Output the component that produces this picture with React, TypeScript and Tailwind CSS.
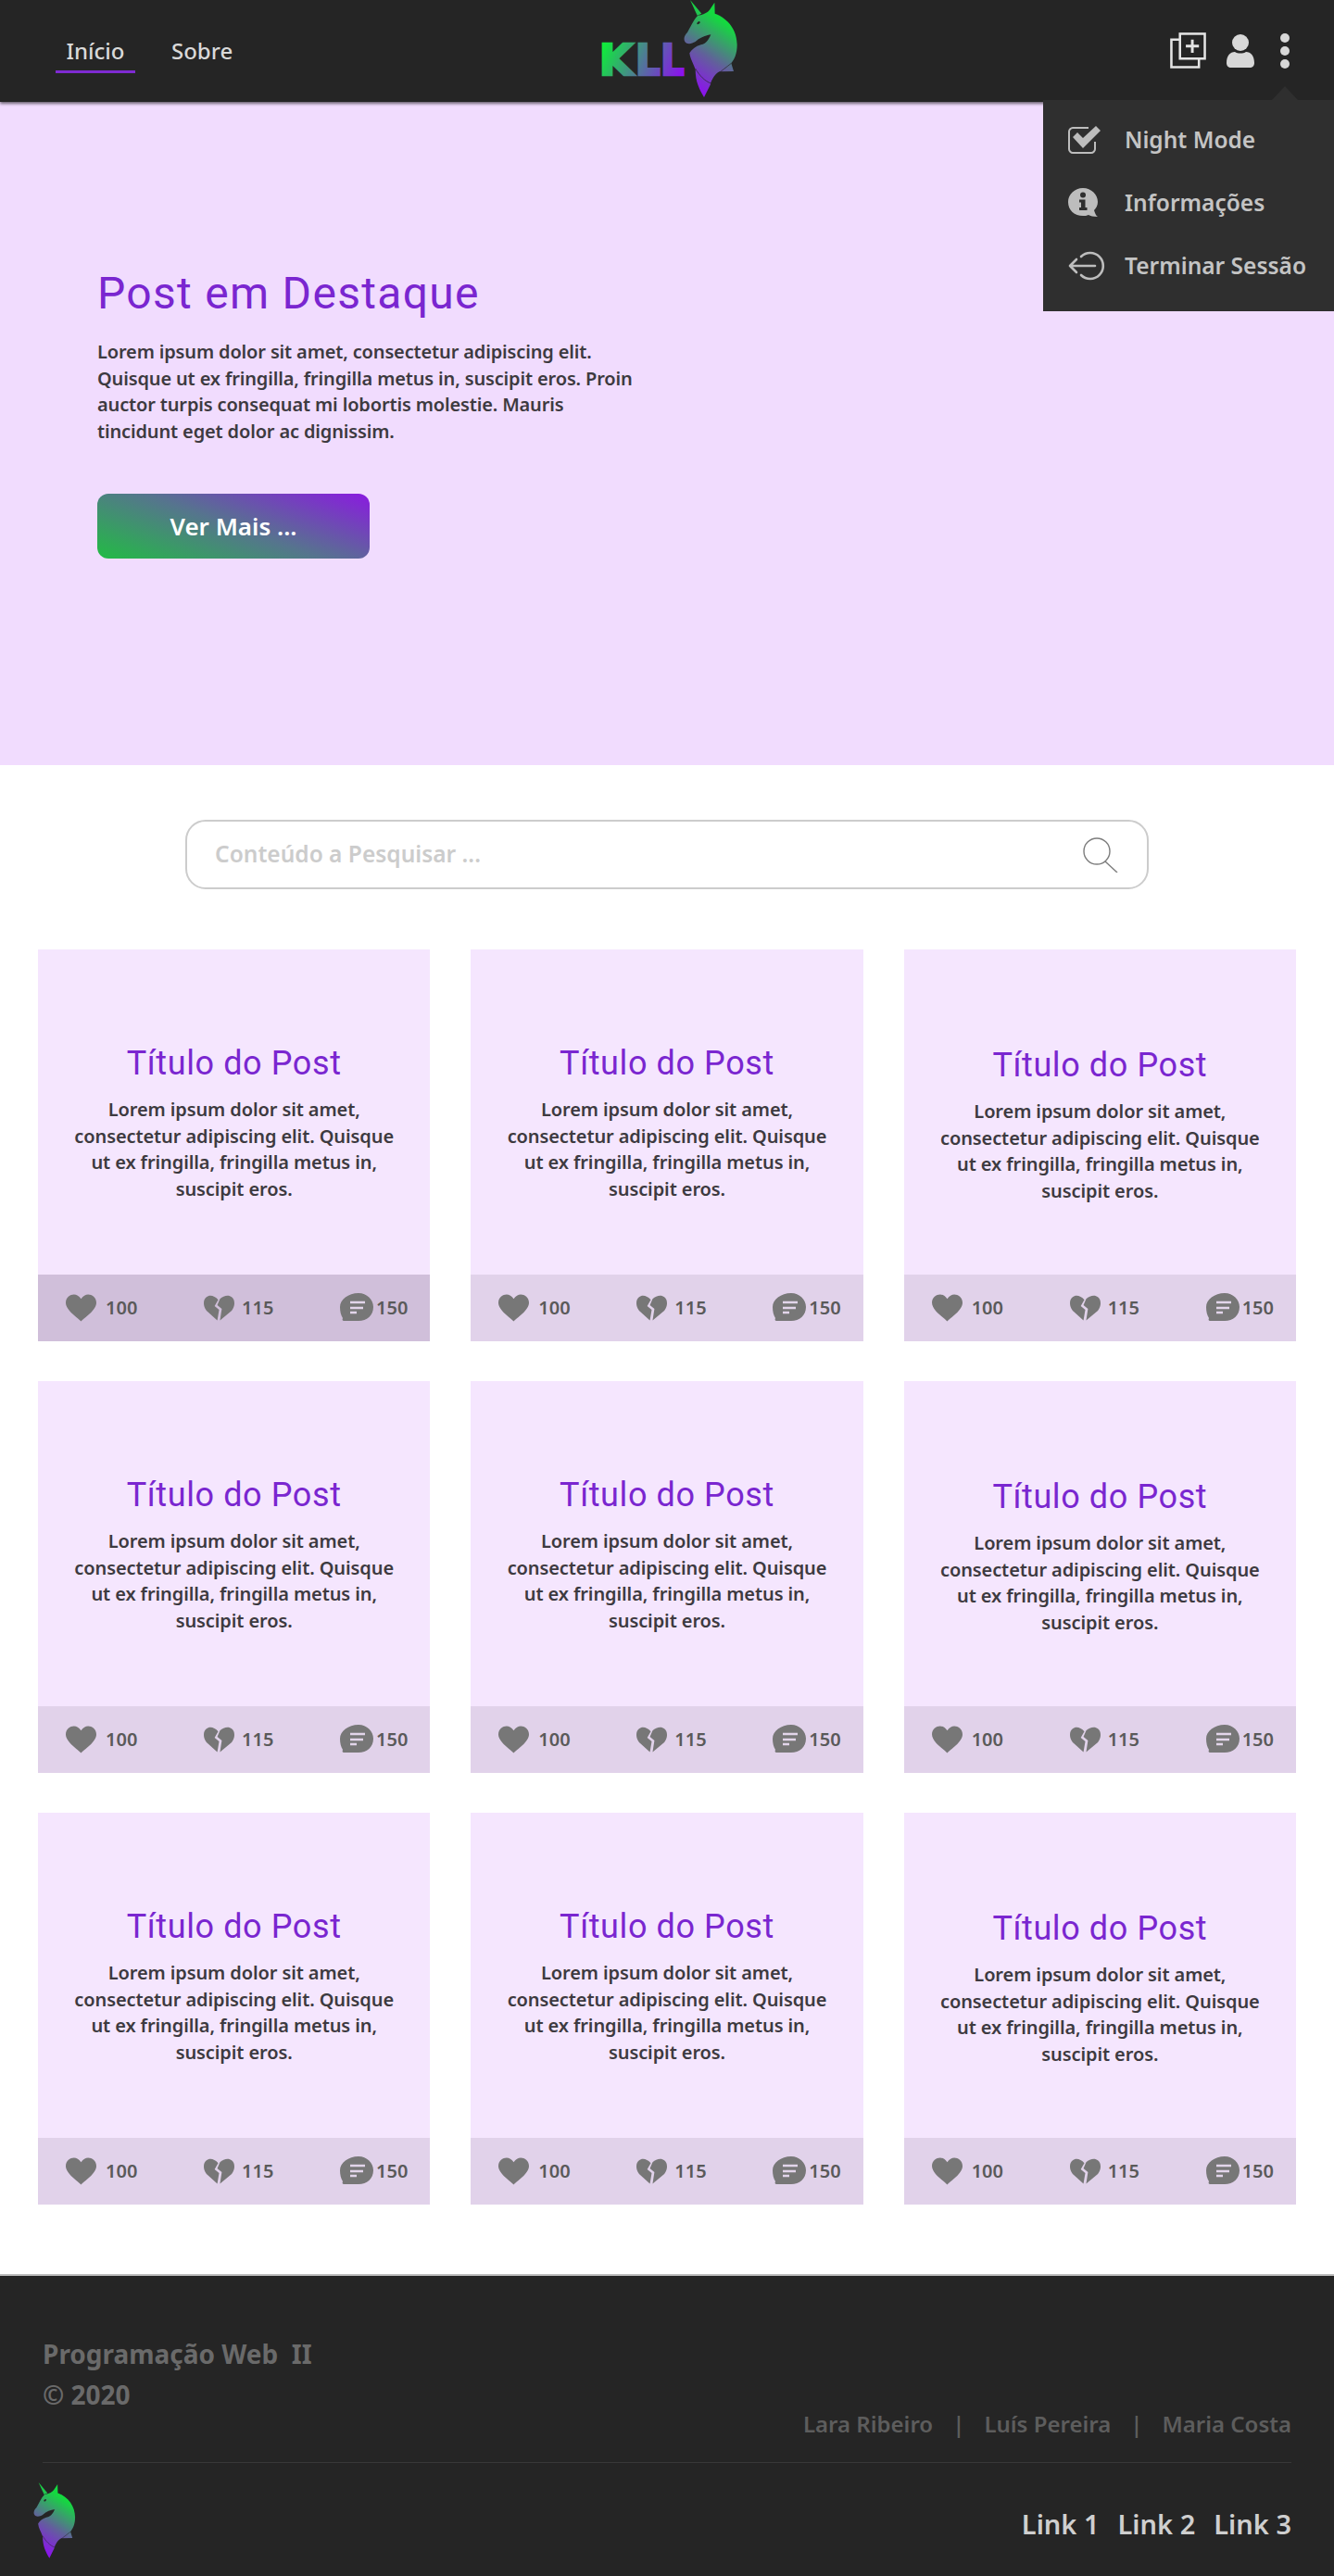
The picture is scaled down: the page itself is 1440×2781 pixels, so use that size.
const bodyFont = "font-['Noto_Sans','Open_Sans',sans-serif]";
const titleFont = "font-['Roboto','Liberation_Sans',sans-serif]";

const posts = [
  { id: 1, bar: "bg-[#d0bfda]", top: "pt-[101px]" },
  { id: 2, bar: "bg-[#e1d2ea]", top: "pt-[101px]" },
  { id: 3, bar: "bg-[#e1d2ea]", top: "pt-[103px]" },
  { id: 4, bar: "bg-[#e1d2ea]", top: "pt-[101px]" },
  { id: 5, bar: "bg-[#e1d2ea]", top: "pt-[101px]" },
  { id: 6, bar: "bg-[#e1d2ea]", top: "pt-[103px]" },
  { id: 7, bar: "bg-[#e1d2ea]", top: "pt-[101px]" },
  { id: 8, bar: "bg-[#e1d2ea]", top: "pt-[101px]" },
  { id: 9, bar: "bg-[#e1d2ea]", top: "pt-[103px]" },
];

const Unicorn = ({ id }: { id: string }) => (
  <>
    <defs>
      <linearGradient id={id} gradientUnits="userSpaceOnUse" x1="365" y1="285" x2="490" y2="95">
        <stop offset="0" stopColor="#8a16ea" />
        <stop offset="0.45" stopColor="#625f9c" />
        <stop offset="1" stopColor="#14d93f" />
      </linearGradient>
    </defs>
    <path d="M345 0 L382 44 L368 50 Z" fill={`url(#${id})`} />
    <path
      d="M370 50 C388 48 402 40 408 32 L424 8 L425 44 C470 60 497 100 497 145 C497 175 488 192 478 205 L486 231 L440 232 C425 240 418 252 410 275 L390 315 C375 290 362 265 362 225 C355 205 345 190 343 172 C350 160 362 150 380 145 C395 142 405 130 412 112 C395 115 378 120 362 135 C350 142 335 145 328 135 C322 125 328 112 336 105 C345 90 355 65 370 50 Z"
      fill={`url(#${id})`}
    />
    <path d="M362 222 C375 245 392 262 412 270 C420 245 445 232 478 205" fill="none" stroke="#252525" strokeWidth="2" />
    <ellipse cx="372" cy="74" rx="6" ry="3.5" transform="rotate(-40 372 74)" fill="#252525" />
  </>
);

const NavLogo = () => (
  <svg viewBox="0 0 540 330" className="w-[180px] h-[110px]">
    <defs>
      <linearGradient id="kll" gradientUnits="userSpaceOnUse" x1="70" y1="140" x2="310" y2="255">
        <stop offset="0" stopColor="#10ea3c" />
        <stop offset="0.5" stopColor="#4f7a96" />
        <stop offset="1" stopColor="#8a12ee" />
      </linearGradient>
    </defs>
    <g fontFamily="DejaVu Sans" fontWeight="700" fontSize="136" fill="url(#kll)" stroke="url(#kll)" strokeWidth="8">
      <text x="50" y="244" textLength="110" lengthAdjust="spacingAndGlyphs">K</text>
      <text x="168" y="244" textLength="80" lengthAdjust="spacingAndGlyphs">L</text>
      <text x="250" y="244" textLength="76" lengthAdjust="spacingAndGlyphs">L</text>
    </g>
    <Unicorn id="uni-nav" />
  </svg>
);

const AddIcon = () => (
  <svg viewBox="0 0 40 40" className="w-[39px] h-[39px]" fill="none" stroke="#e4e4e4" strokeWidth="2.6">
    <rect x="11" y="1.5" width="27.5" height="27.5" />
    <path d="M11 8 H1.5 V38.5 H32 V29" />
    <path d="M24.7 8 V22.5 M17.5 15.2 H32" strokeWidth="3" />
  </svg>
);

const UserIcon = () => (
  <svg viewBox="0 0 30 36" className="w-[30px] h-[36px]" fill="#d8d8d8">
    <circle cx="15" cy="9" r="9" />
    <path d="M0 31 C0 23 4 19 9 19 C12 21 18 21 21 19 C26 19 30 23 30 31 C30 34 28 36 25 36 H5 C2 36 0 34 0 31 Z" />
  </svg>
);

const CheckIcon = () => (
  <svg viewBox="0 0 36 32" className="w-[36px] h-[32px]">
    <path d="M22 3 H5 C3 3 1 5 1 7 V26 C1 28 3 30 5 30 H25 C27 30 29 28 29 26 V18" fill="none" stroke="#bdbdbd" strokeWidth="2" />
    <path d="M5 13 L10 8 L16 14 L30 1 L35 6 L16 25 Z" fill="#bdbdbd" />
  </svg>
);

const InfoIcon = () => (
  <svg viewBox="0 0 32 32" className="w-[32px] h-[32px]">
    <path d="M16 0 C25 0 32 7 32 15 C32 19 30 22 28 24 C29 27 30 30 32 31 C27 31 24 30 22 29 C20 30 18 30 16 30 C7 30 0 24 0 15 C0 7 7 0 16 0 Z" fill="#bdbdbd" />
    <circle cx="16" cy="7.5" r="3" fill="#2f2f2f" />
    <path d="M12 12.5 H18.5 V21 H20.5 V24 H12 V21 H14 V15.5 H12 Z" fill="#2f2f2f" />
  </svg>
);

const LogoutIcon = () => (
  <svg viewBox="0 0 42 32" className="w-[42px] h-[32px]" fill="none" stroke="#bdbdbd" strokeWidth="2.6" strokeLinecap="round" strokeLinejoin="round">
    <path d="M14 6 A14 14 0 1 1 14 26" />
    <path d="M2 16 H29 M9 9 L2 16 L9 23" />
  </svg>
);

const SearchIcon = () => (
  <svg viewBox="0 0 38 38" className="w-[38px] h-[38px]" fill="none" stroke="#7d7d7d" strokeWidth="1.4">
    <circle cx="15" cy="15" r="14" />
    <path d="M24 26 L37 38" />
  </svg>
);

const Heart = () => (
  <svg viewBox="0 0 34 30" className="w-[33px] h-[30px]" fill="#777777">
    <path d="M17 30 C14 26 0 18 0 9 C0 3 5 0 9 0 C12 0 15 2 17 5 C19 2 22 0 25 0 C29 0 34 3 34 9 C34 18 20 26 17 30 Z" />
  </svg>
);

const BrokenHeart = () => (
  <svg viewBox="0 0 34 28" className="w-[33px] h-[28px]" fill="#777777">
    <path d="M16 5 C12 0 6 -1 3 2 C-1 5 -1 12 3 17 L15 28 L17 16 L12 12 Z" />
    <path d="M18 4 C22 0 28 -1 31 2 C35 5 35 12 31 17 L18 28 L20 15 L15 11 Z" />
  </svg>
);

const Bubble = () => (
  <svg viewBox="0 0 36 32" className="w-[36px] h-[32px]">
    <path d="M20 0 C29 0 36 7 36 15 C36 24 29 30 20 30 H4 C3 30 2 29 3 27 C1 24 0 20 0 15 C0 7 9 0 20 0 Z" fill="#777777" />
    <path d="M11 10 H27 M11 16 H25 M11 21 H18" stroke="#e2d5ea" strokeWidth="2.6" />
  </svg>
);

const Stat = ({ icon, value, gap }: { icon: React.ReactNode; value: number; gap: string }) => (
  <div className={`flex items-center ${gap}`}>
    {icon}
    <span className="text-[20px] font-semibold text-[#5a5a5a]">{value}</span>
  </div>
);

const PostCard = ({ bar, top }: { bar: string; top: string }) => (
  <div className="h-[423px] flex flex-col bg-[#f5e6fe]">
    <div className={`flex-1 ${top} text-center`}>
      <h3 className={`${titleFont} text-[36px] leading-[44px] tracking-[0.6px] text-[#7a26d0]`}>
        Título do Post
      </h3>
      <p className="mt-[14px] text-[20px] leading-[28.6px] font-semibold tracking-[-0.1px] text-[#3d3a40]">
        Lorem ipsum dolor sit amet,
        <br />
        consectetur adipiscing elit. Quisque
        <br />
        ut ex fringilla, fringilla metus in,
        <br />
        suscipit eros.
      </p>
    </div>
    <div className={`h-[72px] pl-[30px] pr-[24px] flex items-center justify-between ${bar}`}>
      <Stat icon={<Heart />} value={100} gap="gap-[10px]" />
      <Stat icon={<BrokenHeart />} value={115} gap="gap-[8px]" />
      <Stat icon={<Bubble />} value={150} gap="gap-[3px]" />
    </div>
  </div>
);

const menu = [
  { label: "Night Mode", icon: <CheckIcon /> },
  { label: "Informações", icon: <InfoIcon /> },
  { label: "Terminar Sessão", icon: <LogoutIcon /> },
];

export default function App() {
  return (
    <div className={`${bodyFont} relative w-[1440px] bg-white`}>
      <header className="relative z-10 h-[110px] bg-[#252525] shadow-[0_2px_3px_rgba(0,0,0,0.55)] grid grid-cols-[1fr_auto_1fr] items-center">
        <nav className="pl-[60px] pt-[5px] flex text-[24px] font-medium text-[#d9d9d9]">
          <a className="w-[86px] text-center pb-[3px] border-b-[3px] border-[#7f2bd2]">Início</a>
          <a className="ml-[39px] pb-[3px]">Sobre</a>
        </nav>
        <NavLogo />
        <div className="flex items-center justify-end pr-[48px] pb-[1px] gap-[22px]">
          <AddIcon />
          <UserIcon />
          <div className="w-[10px] flex flex-col gap-[4px] ml-[6px]">
            <span className="w-[10px] h-[10px] rounded-full bg-[#d8d8d8]" />
            <span className="w-[10px] h-[10px] rounded-full bg-[#d8d8d8]" />
            <span className="w-[10px] h-[10px] rounded-full bg-[#d8d8d8]" />
          </div>
        </div>
        <div className="absolute left-[1126px] top-[108px] w-[314px] h-[228px] bg-[#2f2f2f] pt-[9px]">
          <span className="absolute left-[247px] top-[-15px] w-0 h-0 border-x-[14px] border-x-transparent border-b-[15px] border-b-[#2f2f2f]" />
          {menu.map((item) => (
            <div key={item.label} className="h-[68px] flex items-center text-[24.5px] font-semibold text-[#c4c4c4]">
              <div className="w-[88px] pl-[27px] flex items-center">{item.icon}</div>
              <span>{item.label}</span>
            </div>
          ))}
        </div>
      </header>

      <section className="h-[716px] bg-[#f1dcfe] pl-[105px] pt-[177px]">
        <h1 className={`${titleFont} text-[48px] leading-[60px] tracking-[1.3px] text-[#7a26d0]`}>
          Post em Destaque
        </h1>
        <p className="mt-[19px] text-[20px] leading-[28.6px] font-semibold tracking-[-0.15px] text-[#3d3a40]">
          Lorem ipsum dolor sit amet, consectetur adipiscing elit.
          <br />
          Quisque ut ex fringilla, fringilla metus in, suscipit eros. Proin
          <br />
          auctor turpis consequat mi lobortis molestie. Mauris
          <br />
          tincidunt eget dolor ac dignissim.
        </p>
        <button className="mt-[53px] w-[294px] h-[70px] rounded-[12px] bg-[linear-gradient(20deg,#22bb44_0%,#56748e_50%,#8a1ae0_100%)] text-[26px] font-semibold text-white">
          Ver Mais ...
        </button>
      </section>

      <div className="mt-[59px] mx-[200px] h-[75px] rounded-[22px] border-2 border-[#cccccc] pl-[30px] pr-[31px] flex items-center justify-between">
        <span className="text-[24.5px] font-semibold text-[#cccccc]">Conteúdo a Pesquisar ...</span>
        <SearchIcon />
      </div>

      <main className="mt-[65px] mb-[75px] px-[41px] grid grid-cols-3 gap-x-[44px] gap-y-[43px]">
        {posts.map((post) => (
          <PostCard key={post.id} bar={post.bar} top={post.top} />
        ))}
      </main>

      <footer className="h-[326px] bg-[#252525] border-t-2 border-[#bdbdbd] px-[46px] pt-[62px]">
        <div className="h-[116px] flex justify-between">
          <div className="text-[28px] leading-[44px] font-bold text-[#6a6a6a]">
            <p>Programação Web&nbsp; II</p>
            <p>© 2020</p>
          </div>
          <div className="self-end flex gap-[21px] text-[24px] font-semibold text-[#5d5d5d]">
            <span>Lara Ribeiro</span>
            <span>|</span>
            <span>Luís Pereira</span>
            <span>|</span>
            <span>Maria Costa</span>
          </div>
        </div>
        <div className="mt-[23px] border-t border-[#383838] flex justify-between">
          <svg viewBox="320 0 180 320" className="mt-[21px] ml-[-11px] w-[47px] h-[83px]">
            <Unicorn id="uni-foot" />
          </svg>
          <div className="mt-[46px] flex gap-[20px] text-[29px] leading-[40px] font-semibold text-[#cfcfcf]">
            <a>Link 1</a>
            <a>Link 2</a>
            <a>Link 3</a>
          </div>
        </div>
      </footer>
    </div>
  );
}
